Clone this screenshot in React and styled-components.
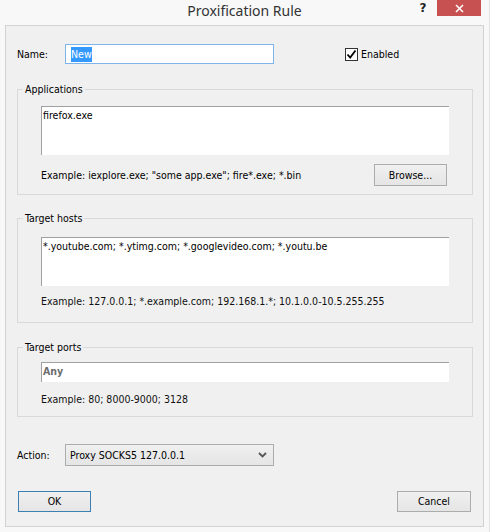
import React from 'react';
import styled, { createGlobalStyle } from 'styled-components';

const Global = createGlobalStyle`
  html, body { margin: 0; padding: 0; background: #f8f8f8; }
  body {
    font-family: "DejaVu Sans Condensed", "Liberation Sans", Arial, sans-serif;
    font-size: 10.5px;
    line-height: 13px;
    color: #000;
  }
  * { box-sizing: border-box; }
`;

const Window = styled.div`
  width: 490px;
  height: 532px;
  display: flex;
  flex-direction: column;
  background: #f8f8f8;
  border-right: 1px solid #e2e2e2;
`;

const TitleBar = styled.div`
  height: 25px;
  flex: none;
  display: grid;
  grid-template-columns: 1fr auto 1fr;
  align-items: start;
`;

const Title = styled.div`
  grid-column: 2;
  font-family: "Noto Sans", "Open Sans", sans-serif;
  font-size: 14px;
  line-height: 22px;
  color: #333;
`;

const Controls = styled.div`
  grid-column: 3;
  justify-self: end;
  display: flex;
  margin-right: 8px;
`;

const HelpButton = styled.div`
  width: 28px;
  height: 16px;
  display: flex;
  align-items: center;
  justify-content: center;
  font-family: "DejaVu Sans", sans-serif;
  font-weight: bold;
  font-size: 12px;
  color: #222;
`;

const CloseButton = styled.div`
  width: 44px;
  height: 16px;
  background: #c75050;
  display: flex;
  align-items: center;
  justify-content: center;
`;

const Client = styled.div`
  flex: 1;
  margin: 0 5px 5px 5px;
  background: #f0f0f0;
  border: 1px solid #d2d2d2;
  display: flex;
  flex-direction: column;
  padding: 18px 10px 0 11px;
`;

const Row = styled.div`
  display: flex;
  align-items: center;
  height: ${(p) => p.$h || 20}px;
  margin-top: ${(p) => p.$mt || 0}px;
`;

const Label = styled.span`
  width: 48px;
  flex: none;
`;

const NameInput = styled.div`
  width: 209px;
  height: 20px;
  background: #fff;
  border: 1px solid #7eb4ea;
  display: flex;
  align-items: center;
  padding-left: 5px;
`;

const Selected = styled.span`
  background: #3399ff;
  color: #fff;
  padding: 1px 0;
`;

const CheckLabel = styled.label`
  display: flex;
  align-items: center;
  gap: 3px;
  margin-left: 71px;
`;

const CheckBox = styled.span`
  width: 13px;
  height: 13px;
  border: 1px solid #333;
  background: #fff;
  display: flex;
  align-items: center;
  justify-content: center;
`;

const Group = styled.div`
  display: flex;
  flex-direction: column;
  border: 1px solid #d9d9d9;
  margin-top: ${(p) => p.$mt}px;
  padding: 0 23px ${(p) => p.$pb}px 23px;
`;

const Legend = styled.span`
  align-self: flex-start;
  height: 13px;
  margin: -7px 0 0 -18px;
  padding: 0 2px;
  background: #f0f0f0;
`;

const TextArea = styled.div`
  height: ${(p) => p.$h || 49}px;
  margin-top: ${(p) => p.$mt}px;
  background: #fff;
  border-top: 1px solid #a0a0a0;
  border-left: 1px solid #a0a0a0;
  padding: 2px 1px;
  white-space: nowrap;
`;

const Placeholder = styled.span`
  font-weight: bold;
  color: #6d6d6d;
`;

const Example = styled.div`
  margin-top: ${(p) => p.$mt || 0}px;
  color: #111;
`;

const ExampleRow = styled.div`
  display: flex;
  align-items: center;
  justify-content: space-between;
  margin-top: 9px;
  height: 22px;
`;

const Button = styled.div`
  width: ${(p) => p.$w || 73}px;
  height: ${(p) => p.$h || 21}px;
  border: 1px solid ${(p) => (p.$default ? '#3c7fb1' : '#acacac')};
  background: linear-gradient(#f0f0f0, #e5e5e5);
  display: flex;
  align-items: center;
  justify-content: center;
  margin-left: ${(p) => p.$ml || 0}px;
  margin-right: ${(p) => p.$mr || 0}px;
`;

const Select = styled.div`
  width: 209px;
  height: 22px;
  border: 1px solid #acacac;
  background: linear-gradient(#f0f0f0, #e5e5e5);
  display: flex;
  align-items: center;
  justify-content: space-between;
  padding: 0 6px 0 4px;
`;

const ButtonRow = styled.div`
  display: flex;
  justify-content: space-between;
  margin-top: 25px;
`;

export default function App() {
  return (
    <>
      <Global />
      <Window>
        <TitleBar>
          <Title>Proxification Rule</Title>
          <Controls>
            <HelpButton>?</HelpButton>
            <CloseButton>
              <svg width="9" height="9" viewBox="0 0 9 9">
                <path d="M1 1L8 8M8 1L1 8" stroke="#fff" strokeWidth="1.6" />
              </svg>
            </CloseButton>
          </Controls>
        </TitleBar>
        <Client>
          <Row>
            <Label>Name:</Label>
            <NameInput>
              <Selected>New</Selected>
            </NameInput>
            <CheckLabel>
              <CheckBox>
                <svg width="11" height="11" viewBox="0 0 11 11">
                  <path d="M1.5 5.5L4.2 8.5L9.5 1.5" stroke="#000" strokeWidth="1.8" fill="none" />
                </svg>
              </CheckBox>
              Enabled
            </CheckLabel>
          </Row>

          <Group $mt={25} $pb={8}>
            <Legend>Applications</Legend>
            <TextArea $mt={10}>firefox.exe</TextArea>
            <ExampleRow>
              <span>Example: iexplore.exe; "some app.exe"; fire*.exe; *.bin</span>
              <Button $h={22} $mr={2}>Browse...</Button>
            </ExampleRow>
          </Group>

          <Group $mt={23} $pb={14}>
            <Legend>Target hosts</Legend>
            <TextArea $mt={12}>*.youtube.com; *.ytimg.com; *.googlevideo.com; *.youtu.be</TextArea>
            <Example $mt={9}>Example: 127.0.0.1; *.example.com; 192.168.1.*; 10.1.0.0-10.5.255.255</Example>
          </Group>

          <Group $mt={24} $pb={10}>
            <Legend>Target ports</Legend>
            <TextArea $mt={8} $h={20}>
              <Placeholder>Any</Placeholder>
            </TextArea>
            <Example $mt={11}>Example: 80; 8000-9000; 3128</Example>
          </Group>

          <Row $mt={27} $h={22}>
            <Label>Action:</Label>
            <Select>
              <span>Proxy SOCKS5 127.0.0.1</span>
              <svg width="9" height="6" viewBox="0 0 9 6">
                <path d="M1 1L4.5 4.5L8 1" stroke="#555" strokeWidth="1.8" fill="none" />
              </svg>
            </Select>
          </Row>

          <ButtonRow>
            <Button $default $ml={1}>OK</Button>
            <Button $w={74} $mr={2}>Cancel</Button>
          </ButtonRow>
        </Client>
      </Window>
    </>
  );
}
